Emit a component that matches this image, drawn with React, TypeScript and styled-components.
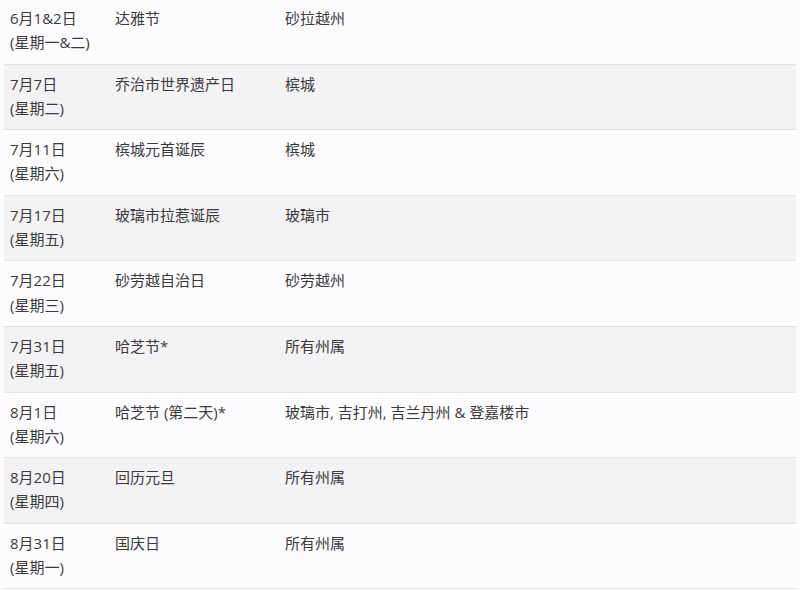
import React from "react";
import styled, { createGlobalStyle } from "styled-components";

const Global = createGlobalStyle`
  html, body { margin: 0; padding: 0; background: #fcfbfd; }
  body { font-family: "Open Sans", "Noto Sans CJK SC", sans-serif; }
`;

const Page = styled.div`
  padding: 0 4px;
  margin-top: -2px;
  overflow: hidden;
`;

const Table = styled.table`
  width: 100%;
  table-layout: fixed;
  border-collapse: collapse;
  border-bottom: 1px solid #e4e3e6;
  color: #3b3b3b;
  font-size: 15px;
`;

const Row = styled.tr<{ $alt: boolean }>`
  background: ${(p) => (p.$alt ? "#f3f2f4" : "#fcfbfd")};
  border-top: 1px solid #e4e3e6;
`;

const Col = styled.col<{ $w?: number }>`
  width: ${(p) => (p.$w ? `${p.$w}px` : "auto")};
`;

const Cell = styled.td`
  padding: 7px 6px 9px;
  line-height: 24.3px;
  vertical-align: top;
  font-family: "Open Sans", "Noto Sans CJK SC", sans-serif;
`;

const Line = styled.div`
  white-space: nowrap;
`;

const rows = [
  ["6月1&2日", "(星期一&二)", "达雅节", "砂拉越州"],
  ["7月7日", "(星期二)", "乔治市世界遗产日", "槟城"],
  ["7月11日", "(星期六)", "槟城元首诞辰", "槟城"],
  ["7月17日", "(星期五)", "玻璃市拉惹诞辰", "玻璃市"],
  ["7月22日", "(星期三)", "砂劳越自治日", "砂劳越州"],
  ["7月31日", "(星期五)", "哈芝节*", "所有州属"],
  ["8月1日", "(星期六)", "哈芝节 (第二天)*", "玻璃市, 吉打州, 吉兰丹州 & 登嘉楼市"],
  ["8月20日", "(星期四)", "回历元旦", "所有州属"],
  ["8月31日", "(星期一)", "国庆日", "所有州属"],
];

export default function App() {
  return (
    <>
      <Global />
      <Page>
        <Table>
          <colgroup>
            <Col $w={105} />
            <Col $w={170} />
            <Col />
          </colgroup>
          <tbody>
            {rows.map((r, i) => (
              <Row key={i} $alt={i % 2 === 1}>
                <Cell>
                  <Line>{r[0]}</Line>
                  <Line>{r[1]}</Line>
                </Cell>
                <Cell>
                  <Line>{r[2]}</Line>
                </Cell>
                <Cell>
                  <Line>{r[3]}</Line>
                </Cell>
              </Row>
            ))}
          </tbody>
        </Table>
      </Page>
    </>
  );
}
